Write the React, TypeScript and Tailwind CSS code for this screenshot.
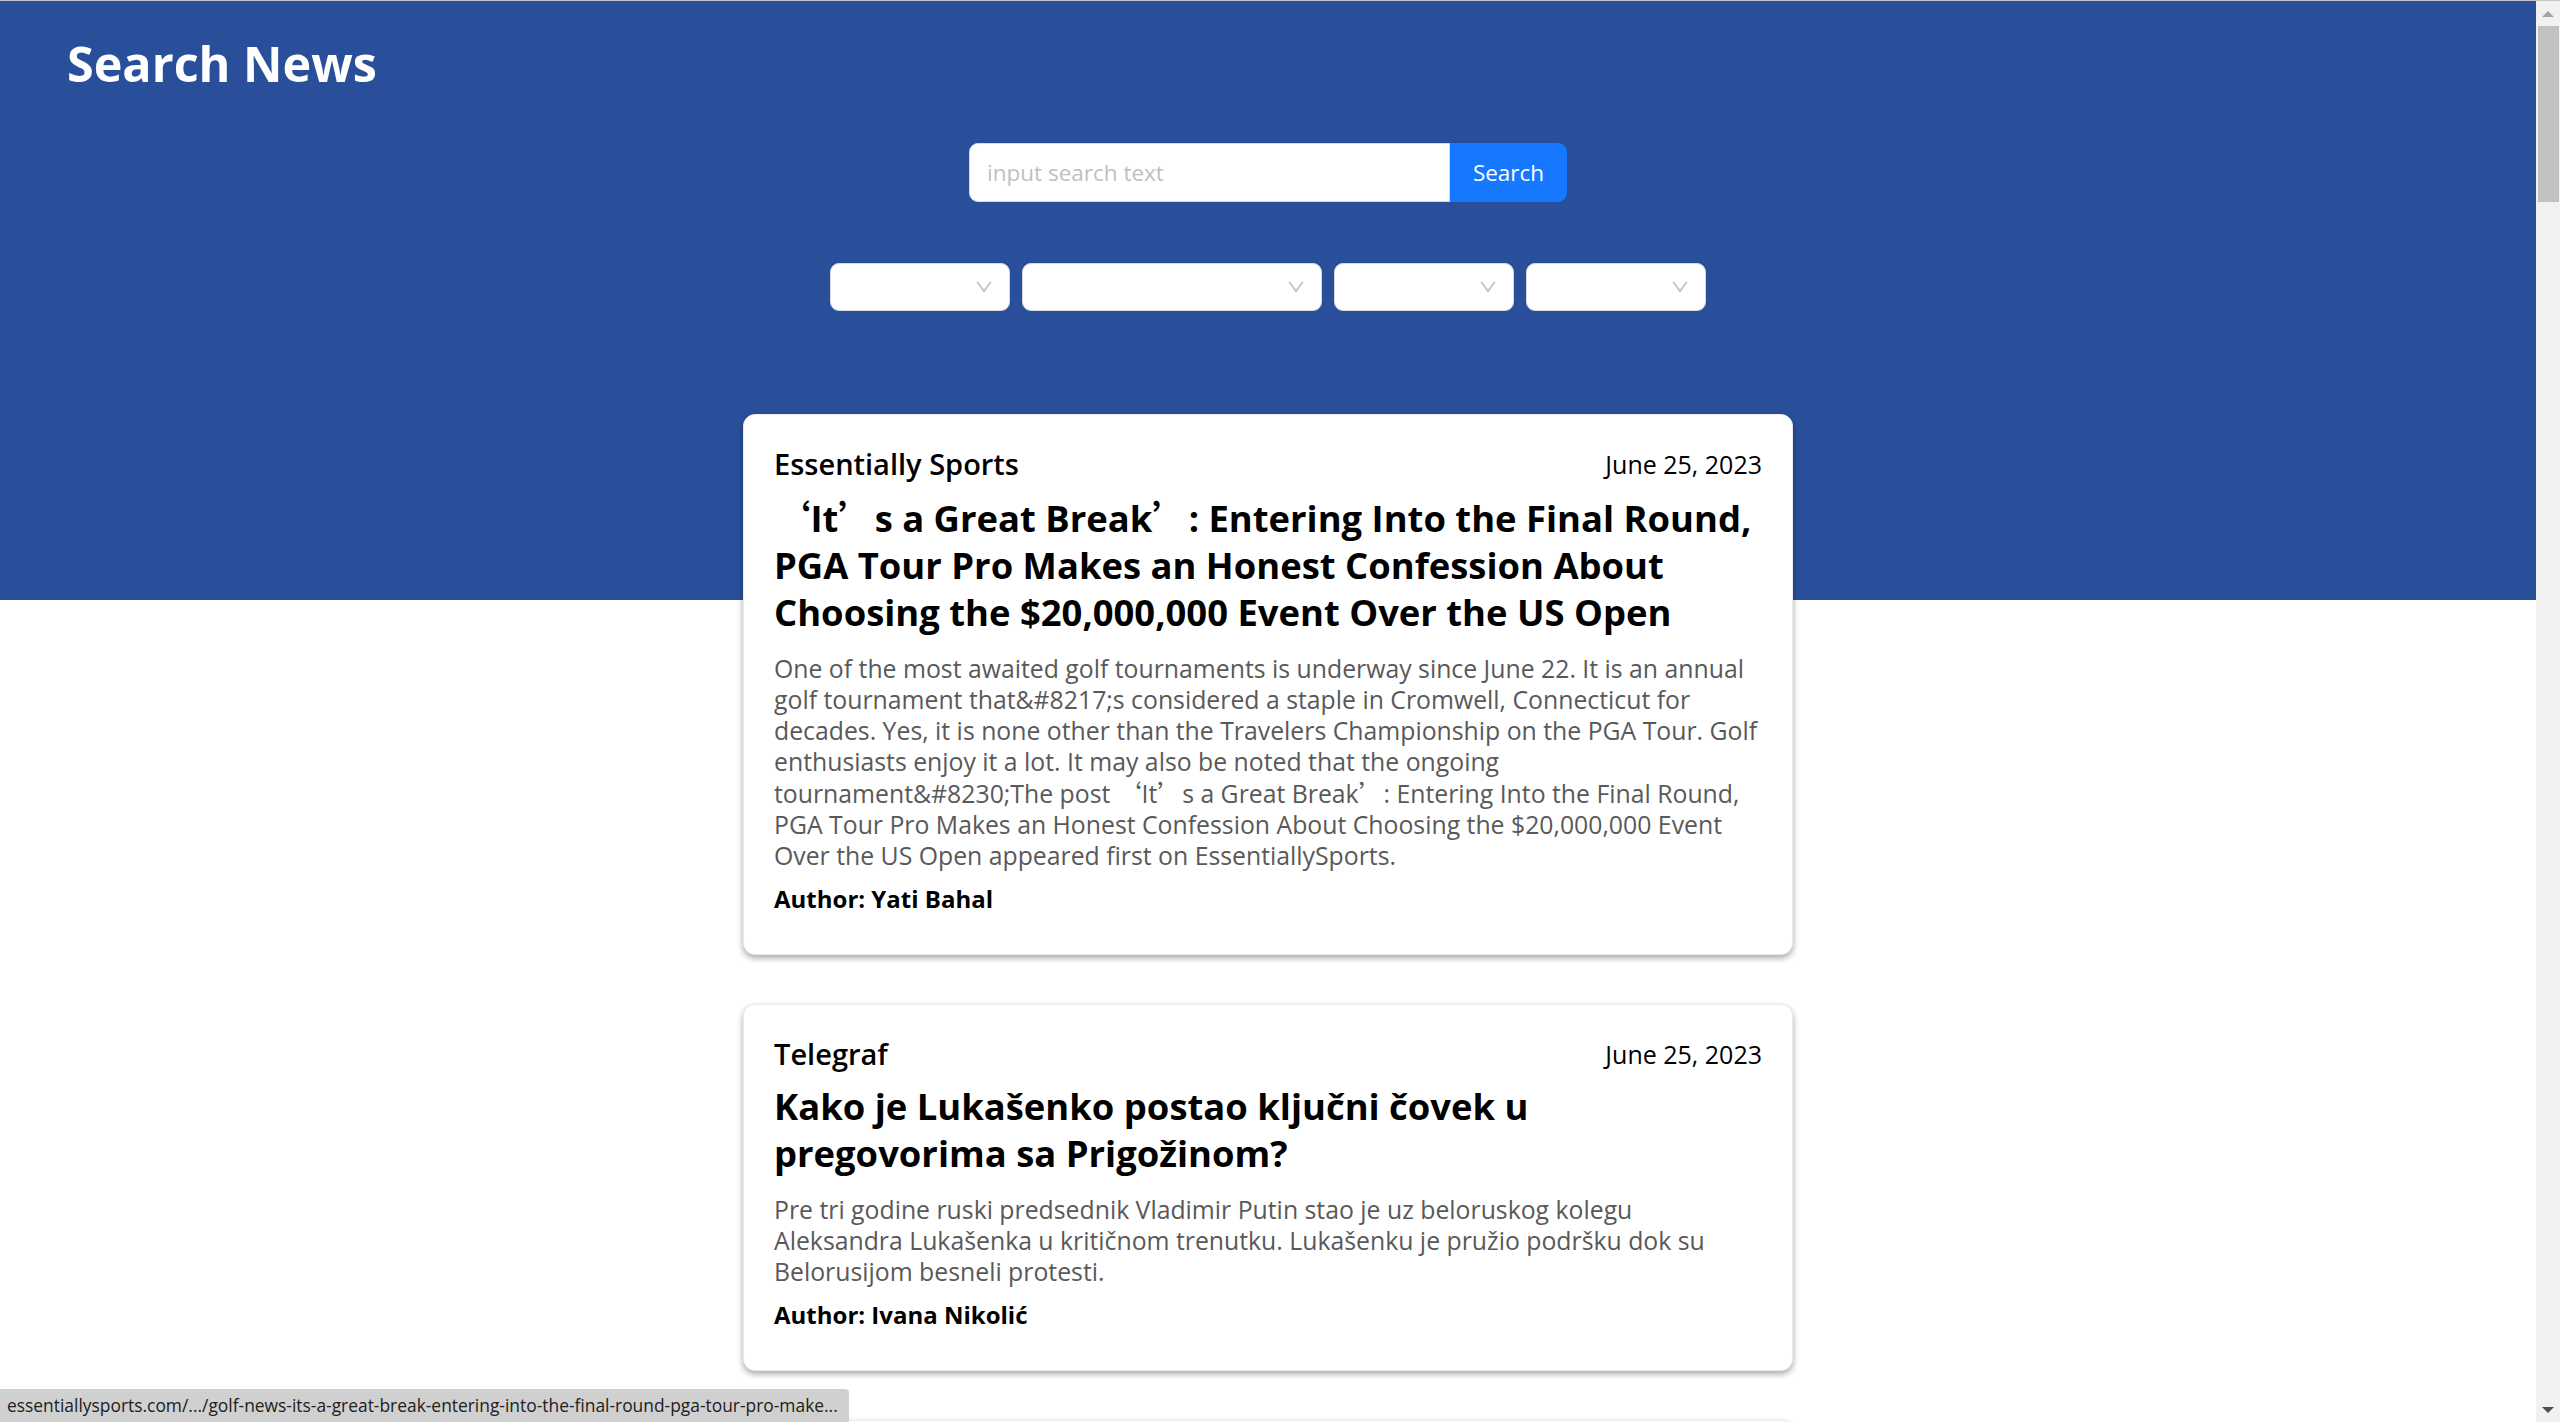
import React from "react";

type Article = {
    source: string;
    date: string;
    title: string;
    description: string;
    author: string;
};

const articles: Article[] = [
    {
        source: "Essentially Sports",
        date: "June 25, 2023",
        title: "‘It’s a Great Break’: Entering Into the Final Round, PGA Tour Pro Makes an Honest Confession About Choosing the $20,000,000 Event Over the US Open",
        description:
            "One of the most awaited golf tournaments is underway since June 22. It is an annual golf tournament that&#8217;s considered a staple in Cromwell, Connecticut for decades. Yes, it is none other than the Travelers Championship on the PGA Tour. Golf enthusiasts enjoy it a lot. It may also be noted that the ongoing tournament&#8230;The post ‘It’s a Great Break’: Entering Into the Final Round, PGA Tour Pro Makes an Honest Confession About Choosing the $20,000,000 Event Over the US Open appeared first on EssentiallySports.",
        author: "Yati Bahal",
    },
    {
        source: "Telegraf",
        date: "June 25, 2023",
        title: "Kako je Lukašenko postao ključni čovek u pregovorima sa Prigožinom?",
        description:
            "Pre tri godine ruski predsednik Vladimir Putin stao je uz beloruskog kolegu Aleksandra Lukašenka u kritičnom trenutku. Lukašenku je pružio podršku dok su Belorusijom besneli protesti.",
        author: "Ivana Nikolić",
    },
    {
        source: "Telegraf",
        date: "June 25, 2023",
        title: "Vesti",
        description: "",
        author: "",
    },
];

// curly quotes come from a CJK font in the original, so they render full width
function Quoted({ text }: { text: string }) {
    const parts = text.split(/([‘’])/);
    return (
        <>
            {parts.map((part, i) =>
                part === "‘" || part === "’" ? (
                    <span key={i} className="font-['Noto_Sans_CJK_SC',sans-serif]">
                        {part}
                    </span>
                ) : (
                    <React.Fragment key={i}>{part}</React.Fragment>
                )
            )}
        </>
    );
}

function DownArrow() {
    return (
        <svg viewBox="64 64 896 896" className="h-[18px] w-[18px]" fill="#bfbfbf">
            <path d="M884 256h-75c-5.1 0-9.9 2.5-12.9 6.6L512 654.2 227.9 262.6c-3-4.1-7.8-6.6-12.9-6.6h-75c-6.5 0-10.3 7.4-6.5 12.7l352.6 486.1c12.8 17.6 39 17.6 51.7 0l352.6-486.1c3.9-5.3.1-12.7-6.4-12.7z" />
        </svg>
    );
}

function SelectBox({ width }: { width: string }) {
    return (
        <div className={`${width} flex h-[48px] items-center justify-end rounded-[9px] border border-[#d9d9d9] bg-white pr-[16px]`}>
            <DownArrow />
        </div>
    );
}

function NewsCard({ article }: { article: Article }) {
    return (
        <div className="rounded-[12px] border border-[#ececec] bg-white px-[30px] pt-[29px] pb-[40px] shadow-[0_3px_6px_rgba(0,0,0,0.35)]">
            <div className="flex h-[40px] items-center justify-between">
                <span className="text-[29px] font-semibold leading-[40px] text-black">{article.source}</span>
                <span className="text-[25px] leading-[40px] text-black">{article.date}</span>
            </div>
            <h2 className="mt-[9px] text-[36.4px] font-bold leading-[47px] text-black">
                <Quoted text={article.title} />
            </h2>
            <p className="mt-[17px] text-[24.8px] leading-[31px] text-[#595959]">
                <Quoted text={article.description} />
            </p>
            <p className="mt-[12px] text-[24px] font-bold leading-[31px] text-black">Author: {article.author}</p>
        </div>
    );
}

function Scrollbar() {
    return (
        <div className="flex w-[24px] flex-col items-center bg-[#f1f1f1]">
            <div className="flex h-[25px] w-full items-center justify-center">
                <div className="h-0 w-0 border-x-[6px] border-b-[6px] border-x-transparent border-b-[#a3a3a3]" />
            </div>
            <div className="ml-[2px] mr-[1px] h-[176px] w-[21px] bg-[#c1c1c1]" />
            <div className="flex-1" />
            <div className="flex h-[24px] w-full items-center justify-center">
                <div className="h-0 w-0 border-x-[6px] border-t-[6px] border-x-transparent border-t-[#505050]" />
            </div>
        </div>
    );
}

export default function App() {
    return (
        <div className="flex h-[1422px] w-full flex-col overflow-hidden bg-white font-['Open_Sans',sans-serif]">
            <div className="h-px bg-[#c6c6c6]" />
            <div className="flex min-h-0 flex-1">
                <main className="relative min-w-0 flex-1 overflow-hidden">
                    <header className="h-[599px] bg-[#294f9b] pt-[35px]">
                        <h1 className="pl-[67px] text-[48.5px] font-bold leading-[54px] text-white">Search News</h1>

                        <div className="mt-[53px] flex justify-center">
                            <div className="flex h-[59px] w-[598px]">
                                <input
                                    className="h-full flex-1 rounded-l-[9px] border border-[#d9d9d9] bg-white pl-[17px] text-[22.5px] text-black outline-none placeholder:text-[#bfbfbf]"
                                    placeholder="input search text"
                                />
                                <button className="h-full w-[117px] rounded-r-[9px] bg-[#1677ff] text-[22.5px] text-white">
                                    Search
                                </button>
                            </div>
                        </div>

                        <div className="mt-[61px] flex justify-center gap-[12px]">
                            <SelectBox width="w-[180px]" />
                            <SelectBox width="w-[300px]" />
                            <SelectBox width="w-[180px]" />
                            <SelectBox width="w-[180px]" />
                        </div>
                    </header>

                    <div className="mx-auto -mt-[186px] flex w-[1050px] flex-col gap-[49px]">
                        {articles.map((a, i) => (
                            <NewsCard key={i} article={a} />
                        ))}
                    </div>

                    <div className="absolute bottom-0 left-0 flex h-[33px] w-[849px] items-center rounded-tr-[4px] bg-[#d0d0d0] pl-[7px] text-[17.4px] whitespace-nowrap text-[#202020]">
                        essentiallysports.com/.../golf-news-its-a-great-break-entering-into-the-final-round-pga-tour-pro-make...
                    </div>
                </main>
                <Scrollbar />
            </div>
        </div>
    );
}
